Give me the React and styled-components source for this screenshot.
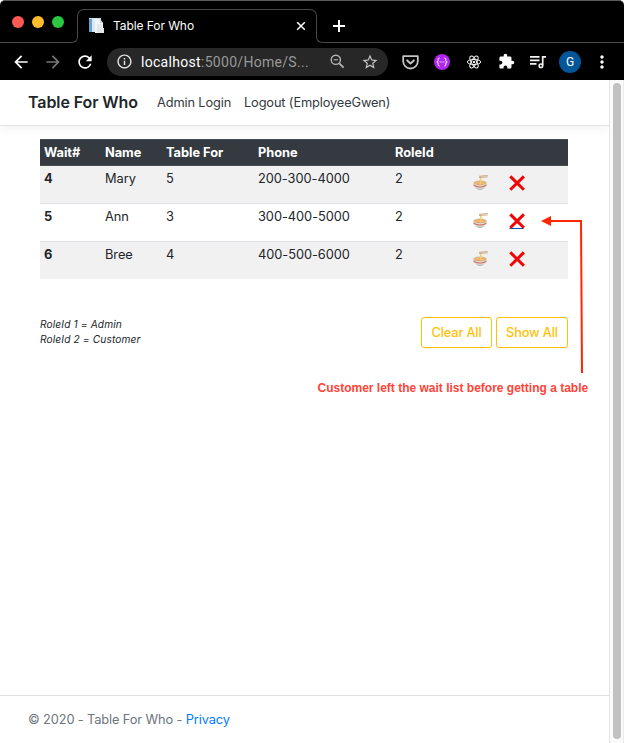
import React from "react";
import styled, { createGlobalStyle } from "styled-components";
import {
  MdArrowBack,
  MdArrowForward,
  MdRefresh,
  MdInfoOutline,
  MdStarBorder,
  MdMoreVert,
} from "react-icons/md";

const GlobalStyle = createGlobalStyle`
  * { box-sizing: border-box; }
  body { margin: 0; background: #fff; font-family: Inter, "Liberation Sans", sans-serif; color: #212529; }
`;

const Window = styled.div`
  position: relative;
  width: 624px;
  height: 743px;
  overflow: hidden;
  display: flex;
  flex-direction: column;
`;

const TabStrip = styled.div`
  height: 43px;
  flex: none;
  display: flex;
  align-items: flex-end;
  background: #000;
  border-top: 1px solid #595b5a;
  border-radius: 5px 5px 0 0;
`;

const StripEdge = styled.div`
  height: 42px;
  display: flex;
  flex-direction: column;
  width: ${(p) => (p.$grow ? "auto" : "78px")};
  flex: ${(p) => (p.$grow ? "1" : "none")};
  margin-left: ${(p) => (p.$grow ? "-1px" : "0")};
`;

const EdgeLine = styled.div`
  height: ${(p) => (p.$side === "right" ? 14 : 11)}px;
  margin-top: auto;
  border-bottom: 1px solid #474849;
  border-right: ${(p) => (p.$side === "right" ? "1px solid #474849" : "none")};
  border-left: ${(p) => (p.$side === "left" ? "1px solid #474849" : "none")};
  border-radius: ${(p) => (p.$side === "right" ? "0 0 6px 0" : "0 0 0 6px")};
`;

const Lights = styled.div`
  display: flex;
  gap: 8px;
  padding: 15px 0 0 12px;
`;

const Light = styled.span`
  width: 12px;
  height: 12px;
  border-radius: 50%;
  background: ${(p) => p.$color};
`;

const Tab = styled.div`
  height: 34px;
  width: 240px;
  margin-left: -1px;
  display: flex;
  flex-direction: column;
`;

const TabTop = styled.div`
  height: 23px;
  border: 1px solid #474849;
  border-bottom: none;
  border-radius: 7px 7px 0 0;
  padding: 7px 10px 0 10px;
  display: flex;
  align-items: flex-start;
  color: #fff;
`;

const TabTitle = styled.span`
  flex: 1;
  margin: 1px 0 0 8px;
  font-size: 12px;
  line-height: 16px;
  letter-spacing: -0.08px;
  white-space: nowrap;
`;

const TabClose = styled.svg`
  margin: 4px 0 0;
  flex: none;
`;

const NewTab = styled.svg`
  margin: 19px 0 0 17px;
  flex: none;
`;

const Toolbar = styled.div`
  height: 37px;
  flex: none;
  display: flex;
  align-items: center;
  background: #000;
  color: #fff;
  padding: 0 6px 0 11px;
  font-family: Roboto, sans-serif;

  svg { flex: none; display: block; }
`;

const NavIcons = styled.div`
  display: flex;
  width: 96px;
  flex: none;
  gap: 12px;
`;

const Address = styled.div`
  display: flex;
  align-items: center;
  width: 281px;
  flex: none;
  height: 28px;
  border-radius: 14px;
  background: #272727;
  padding: 0 9px;
  color: #c4c4c4;
`;

const Url = styled.span`
  flex: 1;
  margin-left: 8px;
  font-size: 14px;
  letter-spacing: 0.3px;
  white-space: nowrap;
  color: #999;

  b { color: #fff; font-weight: 400; }
`;

const AddressIcons = styled.div`
  display: flex;
  align-items: center;
  gap: 16px;
`;

const Extensions = styled.div`
  display: grid;
  grid-template-columns: repeat(7, 32px);
  align-items: center;
  justify-items: center;
  margin-left: 6px;
`;

const Avatar = styled.span`
  width: 22px;
  height: 22px;
  border-radius: 50%;
  background: #02579b;
  font-size: 12px;
  line-height: 22px;
  text-align: center;
`;

const Viewport = styled.div`
  flex: 1;
  display: flex;
  min-height: 0;
`;

const Page = styled.div`
  width: 609px;
  display: flex;
  flex-direction: column;
  font-size: 12.8px;
`;

const Navbar = styled.nav`
  height: 46px;
  flex: none;
  display: flex;
  align-items: center;
  padding: 0 28px;
  border-bottom: 1px solid #dee2e6;
  box-shadow: 0 3px 9px rgba(0, 0, 0, 0.05);
  white-space: nowrap;
`;

const Brand = styled.span`
  width: 129px;
  margin-top: -1px;
  font-size: 16px;
  font-weight: 600;
  letter-spacing: -0.09px;
`;

const NavLink = styled.span`
  width: ${(p) => p.$width}px;
  color: #343a40;
  letter-spacing: -0.13px;
`;

const Main = styled.main`
  flex: 1;
  padding: 13px 41px 0 40px;
`;

const Grid = styled.div`
  display: grid;
  grid-template-columns: 61px 61px 92px 137px 75px 37px 65px;
`;

const HeadGrid = styled(Grid)`
  height: 27px;
  background: #343a40;
  color: #fff;
  font-weight: 700;
  border-top: 1px solid #454d55;
  border-bottom: 1px solid #454d55;
`;

const BodyGrid = styled(Grid)`
  height: ${(p) => (p.$first ? 37 : 38)}px;
  background: ${(p) => (p.$striped ? "#f1f1f1" : "#fff")};
  border-top: ${(p) => (p.$first ? "none" : "1px solid #dee2e6")};
`;

const Cell = styled.div`
  padding: 3px 4px;
  line-height: 19px;
  white-space: nowrap;
  font-weight: ${(p) => (p.$strong ? 700 : "inherit")};
  letter-spacing: -0.03px;
`;

const IconCell = styled.div`
  padding: 9px 7px 0 6px;

  svg { display: block; overflow: visible; }
`;

const Below = styled.div`
  display: flex;
  justify-content: space-between;
  align-items: flex-start;
  margin-top: 38px;
`;

const Legend = styled.div`
  font-size: 10.2px;
  font-style: italic;
  line-height: 15px;
  letter-spacing: 0.12px;
`;

const Buttons = styled.div`
  display: flex;
  gap: 4px;
`;

const OutlineButton = styled.button`
  width: ${(p) => p.$width}px;
  height: 31px;
  padding: 0;
  border: 1px solid #ffc107;
  border-radius: 3px;
  background: transparent;
  color: #ffc107;
  font: 500 12.8px Inter, sans-serif;
  letter-spacing: -0.15px;
`;

const Footer = styled.footer`
  height: 48px;
  flex: none;
  padding: 14px 28px;
  border-top: 1px solid #dee2e6;
  line-height: 19px;
  letter-spacing: -0.12px;
  color: #6c757d;

  a { color: #007bff; }
`;

const ScrollTrack = styled.div`
  width: 15px;
  padding: 3px 2px 4px 3px;
  background: #fafafa;
  border-left: 1px solid #e5e5e5;
  border-right: 1px solid #ededed;
`;

const ScrollThumb = styled.div`
  width: 8px;
  height: 100%;
  border-radius: 4px;
  background: #c1c1c1;
`;

const Pointer = styled.svg`
  position: absolute;
  left: 540px;
  top: 214px;
`;

const Note = styled.div`
  position: absolute;
  left: 317.5px;
  top: 380px;
  font: 700 12px/16px "Liberation Sans", Arial, sans-serif;
  color: #ff4439;
  white-space: nowrap;
`;

const Favicon = () => (
  <svg width="17" height="17" viewBox="0 0 17 17">
    <path d="M1 1h12v14H1z" fill="#c4d6e5" />
    <path d="M1 2h3v13H1z" fill="#67a4cd" />
    <path d="M4 1h5v14H4z" fill="#dce8f1" />
    <path d="M7 2h5l3 4v10H7V2z" fill="#f1f5f8" />
    <path d="M12 2v4h3" fill="#c5ced5" />
    <path d="M9 8h5M9 10h5" stroke="#d3dbe2" />
    <path d="M9 11h7v5H9z" fill="#dfe4e9" />
  </svg>
);

const ZoomOut = () => (
  <svg width="15" height="15" viewBox="0 0 15 15" fill="none" stroke="#b5b5b5" strokeWidth="1.4">
    <circle cx="5.8" cy="5.8" r="4.6" />
    <path d="M3.6 5.8H8" strokeWidth="1.1" />
    <path d="M9.3 9.3l4.3 4.3" strokeWidth="1.8" />
  </svg>
);

const Pocket = () => (
  <svg width="17" height="16" viewBox="0 0 17 16" fill="none" stroke="#c4c4c4" strokeWidth="1.8" strokeLinejoin="round" strokeLinecap="round">
    <path d="M1.2 2.2h14.6v5a7.3 7.3 0 0 1-14.6 0z" />
    <path d="M5.2 6.4l3.3 3.1 3.3-3.1" strokeWidth="2" />
  </svg>
);

const Braces = () => (
  <svg width="16" height="16" viewBox="0 0 16 16" fill="none" stroke="#fff" strokeWidth="1">
    <circle cx="8" cy="8" r="8" fill="#b026ef" stroke="none" />
    <path d="M5.6 4q-1.5 0-1.5 1.4v1.4q0 1.2-1.3 1.2 1.3 0 1.3 1.2v1.4q0 1.4 1.5 1.4M10.4 4q1.5 0 1.5 1.4v1.4q0 1.2 1.3 1.2-1.3 0-1.3 1.2v1.4q0 1.4-1.5 1.4" />
    <path d="M5.7 8h1M7.5 8h1M9.3 8h1" />
  </svg>
);

const ReactMark = () => (
  <svg width="16" height="16" viewBox="0 0 16 16" fill="none" stroke="#f3f3f3" strokeWidth="1">
    <ellipse cx="8" cy="8" rx="6.7" ry="2.6" />
    <ellipse cx="8" cy="8" rx="6.7" ry="2.6" transform="rotate(60 8 8)" />
    <ellipse cx="8" cy="8" rx="6.7" ry="2.6" transform="rotate(120 8 8)" />
    <circle cx="8" cy="8" r="1.2" fill="#f3f3f3" stroke="none" />
  </svg>
);

const Puzzle = () => (
  <svg width="17" height="17" viewBox="0 0 24 24" fill="#fff">
    <path d="M20.5 11H19V7c0-1.1-.9-2-2-2h-4V3.5a2.5 2.5 0 0 0-5 0V5H4c-1.1 0-2 .9-2 2v3.8h1.5c1.5 0 2.7 1.2 2.700 2.700s-1.200 2.700-2.700 2.700H2V20c0 1.100.9 2 2 2h3.800v-1.500c0-1.500 1.200-2.700 2.700-2.700s2.700 1.200 2.700 2.700V22H17c1.100 0 2-.9 2-2v-4h1.500a2.500 2.500 0 0 0 0-5z" />
  </svg>
);

const Playlist = () => (
  <svg width="16" height="14" viewBox="0 0 16 14" fill="none" stroke="#f4f4f4" strokeWidth="1.7">
    <path d="M0 1.9h9.5M0 5.4h9.5M0 8.9h6.5M12.7 10.6V1.9H16" />
    <circle cx="10.9" cy="10.8" r="1.8" strokeWidth="1.5" />
  </svg>
);

const Noodles = () => (
  <svg width="17" height="16" viewBox="0 0 17 16">
    <path d="M1 8Q1.6 14.8 8 14.8T15 8z" fill="#dcdcd9" />
    <path d="M1.3 9.2Q8 13.7 14.7 9.2l-.5 1.7Q8 14.3 1.8 10.9z" fill="#cf6f62" />
    <path d="M4.4 13.3Q8 14 11.6 13.3 10.5 15 8 15t-3.6-1.7z" fill="#b9b7b4" />
    <ellipse cx="8" cy="8" rx="7" ry="2.8" fill="#d8d3ca" />
    <ellipse cx="8" cy="8" rx="5.9" ry="2.1" fill="#e9a65f" />
    <path d="M3.5 8.3q2-1.5 4 0t4.5-.5" fill="none" stroke="#f7cf8a" />
    <path d="M8.7 1.5v6.3" stroke="#f0d276" strokeWidth="1.7" />
    <path d="M7 1.3L15.7.5M7 2.4l8.7-.5" stroke="#c3a47e" strokeWidth=".9" />
  </svg>
);

const Cross = ({ underlined }) => (
  <svg width="17" height="16" viewBox="0 0 17 16">
    {underlined && <path d="M.5 15.500h14" stroke="#0056b3" />}
    <path d="M1.300 1.400L14.900 14.800M14.900 1.400L1.300 14.800" stroke="#ee0505" strokeWidth="3" strokeLinecap="butt" />
  </svg>
);

const guests = [
  { wait: 4, name: "Mary", size: 5, phone: "200-300-4000", role: 2 },
  { wait: 5, name: "Ann", size: 3, phone: "300-400-5000", role: 2, hovered: true },
  { wait: 6, name: "Bree", size: 4, phone: "400-500-6000", role: 2 },
];

export default function App() {
  return (
    <Window>
      <GlobalStyle />
      <TabStrip>
        <StripEdge>
          <Lights>
            <Light $color="#ff5a52" />
            <Light $color="#ffbd2e" />
            <Light $color="#28c840" />
          </Lights>
          <EdgeLine $side="right" />
        </StripEdge>
        <Tab>
          <TabTop>
            <Favicon />
            <TabTitle>Table For Who</TabTitle>
            <TabClose width="10" height="10" viewBox="0 0 10 10" stroke="#fff" strokeWidth="1.5">
              <path d="M1.2 1.2l7.6 7.6M8.8 1.2L1.2 8.8" />
            </TabClose>
          </TabTop>
        </Tab>
        <StripEdge $grow>
          <NewTab width="12" height="12" viewBox="0 0 12 12" stroke="#fff" strokeWidth="2">
            <path d="M6 0v12M0 6h12" />
          </NewTab>
          <EdgeLine $side="left" />
        </StripEdge>
      </TabStrip>

      <Toolbar>
        <NavIcons>
          <MdArrowBack size={20} />
          <MdArrowForward size={20} color="#777" />
          <MdRefresh size={20} />
        </NavIcons>
        <Address>
          <MdInfoOutline size={17} color="#e4e4e4" />
          <Url><b>localhost</b>:5000/Home/S...</Url>
          <AddressIcons>
            <ZoomOut />
            <MdStarBorder size={18} />
          </AddressIcons>
        </Address>
        <Extensions>
          <Pocket />
          <Braces />
          <ReactMark />
          <Puzzle />
          <Playlist />
          <Avatar>G</Avatar>
          <MdMoreVert size={20} />
        </Extensions>
      </Toolbar>

      <Viewport>
        <Page>
          <Navbar>
            <Brand>Table For Who</Brand>
            <NavLink $width={87}>Admin Login</NavLink>
            <NavLink $width={150}>Logout (EmployeeGwen)</NavLink>
          </Navbar>
          <Main>
            <div>
              <HeadGrid>
                <Cell>Wait#</Cell>
                <Cell>Name</Cell>
                <Cell>Table For</Cell>
                <Cell>Phone</Cell>
                <Cell>RoleId</Cell>
              </HeadGrid>
              {guests.map((g, i) => (
                <BodyGrid key={g.wait} $first={i === 0} $striped={i % 2 === 0}>
                  <Cell $strong>{g.wait}</Cell>
                  <Cell>{g.name}</Cell>
                  <Cell>{g.size}</Cell>
                  <Cell>{g.phone}</Cell>
                  <Cell>{g.role}</Cell>
                  <IconCell><Noodles /></IconCell>
                  <IconCell><Cross underlined={g.hovered} /></IconCell>
                </BodyGrid>
              ))}
            </div>
            <Below>
              <Legend>
                RoleId 1 = Admin
                <br />
                RoleId 2 = Customer
              </Legend>
              <Buttons>
                <OutlineButton $width={71}>Clear All</OutlineButton>
                <OutlineButton $width={72}>Show All</OutlineButton>
              </Buttons>
            </Below>
          </Main>
          <Footer>
            © 2020 - Table For Who - <a>Privacy</a>
          </Footer>
        </Page>
        <ScrollTrack>
          <ScrollThumb />
        </ScrollTrack>
      </Viewport>

      <Pointer width="46" height="160" viewBox="0 0 46 160">
        <path d="M10 7H41L42 159" fill="none" stroke="#ff2600" strokeWidth="2" />
        <path d="M1 7l10-5v10z" fill="#ff2600" />
      </Pointer>
      <Note>Customer left the wait list before getting a table</Note>
    </Window>
  );
}
